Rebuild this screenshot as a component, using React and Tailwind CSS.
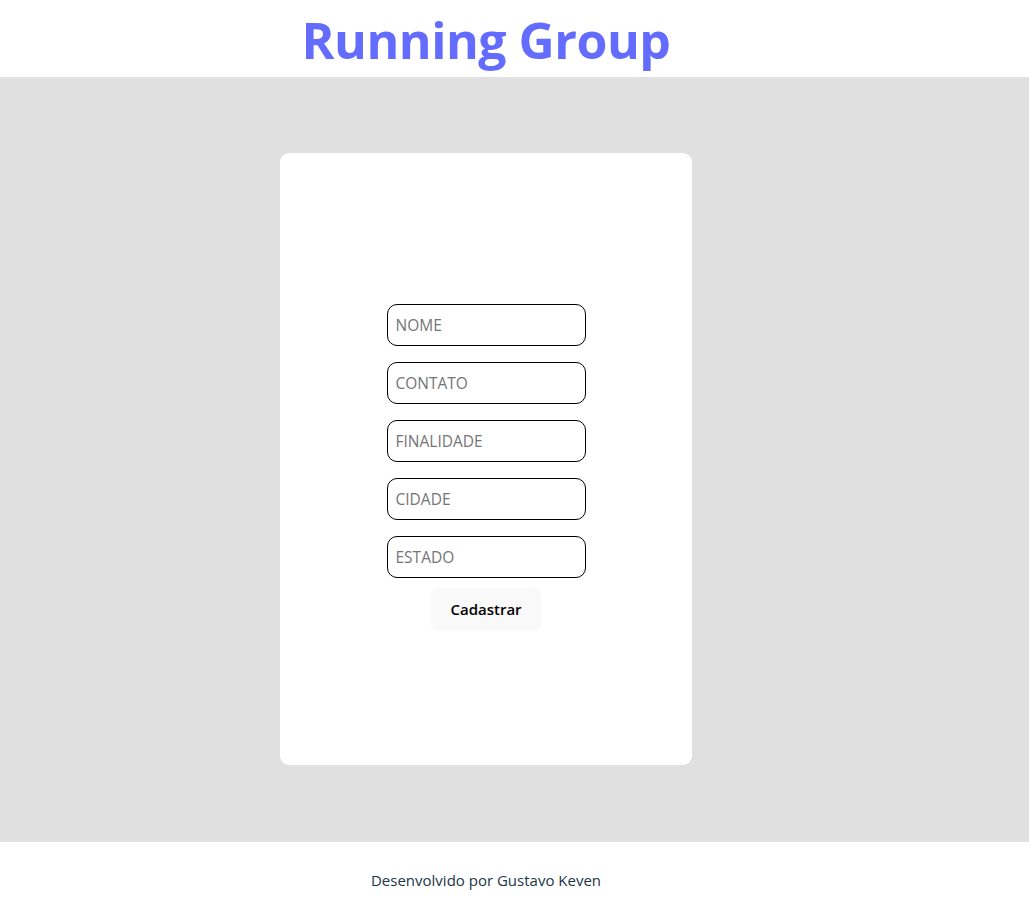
export default function App() {
  const fields = ["NOME", "CONTATO", "FINALIDADE", "CIDADE", "ESTADO"];
  return (
    <div className="min-h-screen bg-white text-[#213547]" style={{ fontFamily: '"Open Sans", "Noto Sans", sans-serif' }}>
      <header className="h-[77px] flex">
        <div className="w-[972px] flex items-center justify-center">
          <h1 className="text-[50px] font-bold text-[#646cff] leading-none tracking-[-0.5px] pt-[3px]">Running Group</h1>
        </div>
      </header>
      <main className="bg-[#e0e0e0] pt-[76px] pb-[77px]">
        <div className="w-[972px] flex justify-center">
          <div className="w-[412px] h-[612px] bg-white rounded-[9px] flex flex-col items-center justify-center">
            <form className="flex flex-col items-center pt-[16px]" onSubmit={(e) => e.preventDefault()}>
              <div className="flex flex-col gap-4">
                {fields.map((f) => (
                  <input
                    key={f}
                    placeholder={f}
                    className="w-[199px] h-[42px] border border-black rounded-[10px] px-2 text-[15.5px] placeholder:text-[#757575] outline-none"
                  />
                ))}
              </div>
              <button className="mt-[10px] w-[110px] h-[43px] bg-[#f9f9f9] rounded-[8px] text-[15px] font-semibold text-black">
                Cadastrar
              </button>
            </form>
          </div>
        </div>
      </main>
      <footer className="h-[73px] flex">
        <div className="w-[972px] flex items-center justify-center pt-[4px]">
          <p className="text-[15px] text-[#213547]">Desenvolvido por Gustavo Keven</p>
        </div>
      </footer>
    </div>
  );
}
